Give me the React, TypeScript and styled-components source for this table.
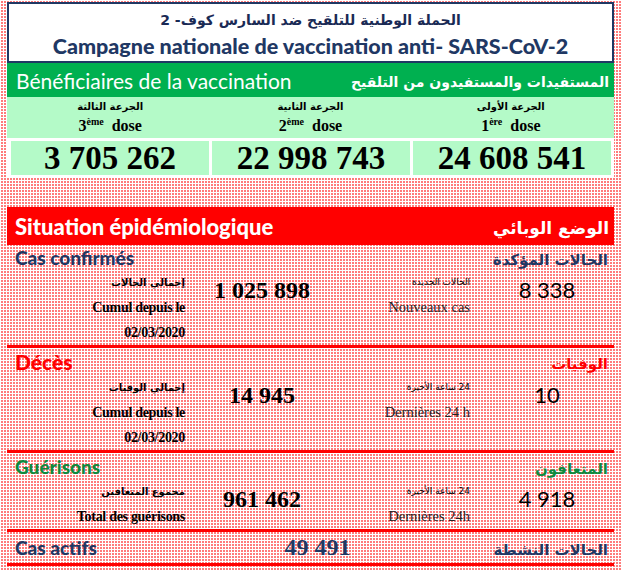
import React from 'react'
import styled, { createGlobalStyle } from 'styled-components'

const navy = '#1f3864'
const green = '#00b050'
const lightGreen = '#b4fac8'
const red = '#ff0000'
const calibri = `"Lato", "DejaVu Sans", sans-serif`
const cambria = `"Liberation Serif", "DejaVu Serif", serif`
const arabic = `"DejaVu Sans", sans-serif`

const GlobalStyle = createGlobalStyle`
  html, body {
    margin: 0;
    padding: 0;
  }
  body {
    background-color: #ff7b7b;
    background-image:
      linear-gradient(90deg, #fff 1px, transparent 1px),
      linear-gradient(#fff 1px, transparent 1px);
    background-size: 3px 3px;
  }
`

const Page = styled.main`
  width: 621px;
  height: 570px;
  box-sizing: border-box;
  padding: 2px 7px 0 7px;
  display: flex;
  flex-direction: column;
  overflow: hidden;
  white-space: nowrap;
`

const TitleBox = styled.header`
  height: 61px;
  box-sizing: border-box;
  border: 2px solid ${navy};
  background: #fff;
  display: flex;
  flex-direction: column;
  align-items: center;
  justify-content: center;
`

const ArabicTitle = styled.div`
  font-family: ${arabic};
  font-weight: bold;
  font-size: 14px;
  line-height: 26px;
  color: #1a2a55;
  direction: rtl;
`

const FrenchTitle = styled.div`
  font-family: ${calibri};
  font-weight: 900;
  font-size: 21.5px;
  line-height: 26px;
  color: ${navy};
`

const Band = styled.div<{ $bg: string; $height: number }>`
  height: ${p => p.$height}px;
  background: ${p => p.$bg};
  display: flex;
  align-items: center;
  justify-content: space-between;
  padding: 0 5px 0 9px;
  color: #fff;
`

const BandFrench = styled.span<{ $bold?: boolean }>`
  font-family: ${calibri};
  font-size: ${p => (p.$bold ? 22 : 21)}px;
  font-weight: ${p => (p.$bold ? 900 : 400)};
`

const BandArabic = styled.span<{ $size: number }>`
  font-family: ${arabic};
  font-weight: bold;
  font-size: ${p => p.$size}px;
  direction: rtl;
  padding-top: 4px;
`

const DoseLabels = styled.div`
  background: ${lightGreen};
  display: grid;
  grid-template-columns: 1fr 1fr 1fr;
  height: 41px;
  padding: 0 3px;
`

const DoseLabel = styled.div`
  display: flex;
  flex-direction: column;
  align-items: center;
  padding-top: 1px;
`

const SmallArabic = styled.div<{ $size?: number; $weight?: number }>`
  font-family: ${arabic};
  font-size: ${p => p.$size ?? 10}px;
  font-weight: ${p => p.$weight ?? 700};
  direction: rtl;
  line-height: 17px;
  color: #000;
`

const DoseText = styled.div`
  font-family: ${cambria};
  font-weight: bold;
  font-size: 16px;
  line-height: 22px;
  white-space: pre;
  sup {
    font-size: 10px;
    vertical-align: 6px;
    line-height: 0;
  }
`

const NumberRow = styled.div`
  background: #fff;
  display: grid;
  grid-template-columns: 1fr 1fr 1fr;
  gap: 3px;
  padding: 3px 3px 3px 4px;
`

const NumberCell = styled.div`
  background: ${lightGreen};
  height: 34px;
  display: flex;
  align-items: center;
  justify-content: center;
  font-family: ${cambria};
  font-weight: bold;
  font-size: 33px;
  color: #000;
`

const SituationBar = styled(Band)`
  margin-top: 29px;
  padding: 0 5px 0 8px;
`

const Section = styled.section`
  border-bottom: 3px solid ${red};
`

const SectionHead = styled.div<{ $color: string; $height: number }>`
  height: ${p => p.$height}px;
  display: flex;
  align-items: center;
  justify-content: space-between;
  padding: 0 6px 0 8px;
  color: ${p => p.$color};
`

const HeadFrench = styled.span<{ $size: number }>`
  font-family: ${calibri};
  font-weight: 900;
  font-size: ${p => p.$size}px;
`

const HeadArabic = styled.span<{ $size: number }>`
  font-family: ${arabic};
  font-weight: bold;
  font-size: ${p => p.$size}px;
  direction: rtl;
  padding-top: 5px;
`

const DataRow = styled.div`
  display: grid;
  grid-template-columns: 178px 154px 131px 1fr;
  align-items: start;
`

const LabelCol = styled.div`
  display: flex;
  flex-direction: column;
  align-items: flex-end;
`

const BoldLine = styled.div`
  font-family: ${cambria};
  font-weight: bold;
  font-size: 14px;
  line-height: 25px;
  color: #000;
  letter-spacing: -0.3px;
`

const PlainLine = styled.div`
  font-family: ${cambria};
  font-size: 14.5px;
  line-height: 25px;
  color: #222;
`

const ArabicLine = styled(SmallArabic)`
  line-height: 25px;
`

const BigNumber = styled.div`
  font-family: ${cambria};
  font-weight: bold;
  font-size: 24px;
  line-height: 40px;
  text-align: center;
  color: #000;
`

const NewNumber = styled.div`
  font-family: ${calibri};
  font-size: 22px;
  line-height: 40px;
  text-align: center;
  padding-left: 10px;
  color: #000;
`

const ActiveRow = styled.div`
  height: 31px;
  display: grid;
  grid-template-columns: 1fr auto 1fr;
  align-items: center;
  padding: 0 6px 0 8px;
  color: ${navy};
`

const ActiveNumber = styled.span`
  font-family: ${cambria};
  font-weight: bold;
  font-size: 24px;
  color: ${navy};
  padding-left: 12px;
`

const ActiveArabic = styled(HeadArabic)`
  justify-self: end;
`

const doses = [
  { ar: 'الجرعة الثالثة', n: '3', sup: 'ème', value: '3 705 262' },
  { ar: 'الجرعة الثانية', n: '2', sup: 'ème', value: '22 998 743' },
  { ar: 'الجرعة الأولى', n: '1', sup: 'ère', value: '24 608 541' },
]

type Stat = {
  fr: string
  ar: string
  color: string
  headHeight: number
  totalAr: string
  totalFr: string[]
  total: string
  recentAr: string
  recentFr: string
  recent: string
}

const stats: Stat[] = [
  {
    fr: 'Cas confirmés',
    ar: 'الحالات المؤكدة',
    color: navy,
    headHeight: 25,
    totalAr: 'إجمالي الحالات',
    totalFr: ['Cumul depuis le', '02/03/2020'],
    total: '1 025 898',
    recentAr: 'الحالات الجديدة',
    recentFr: 'Nouveaux cas',
    recent: '8 338',
  },
  {
    fr: 'Décès',
    ar: 'الوفيات',
    color: red,
    headHeight: 27,
    totalAr: 'إجمالي الوفيات',
    totalFr: ['Cumul depuis le', '02/03/2020'],
    total: '14 945',
    recentAr: '24 ساعة الأخيرة',
    recentFr: 'Dernières 24 h',
    recent: '10',
  },
  {
    fr: 'Guérisons',
    ar: 'المتعافون',
    color: '#0e8a3e',
    headHeight: 26,
    totalAr: 'مجموع المتعافين',
    totalFr: ['Total des guérisons'],
    total: '961 462',
    recentAr: '24 ساعة الأخيرة',
    recentFr: 'Dernières 24h',
    recent: '4 918',
  },
]

const App = () => {
  return (
    <>
      <GlobalStyle />
      <Page>
        <TitleBox>
          <ArabicTitle>الحملة الوطنية للتلقيح ضد السارس كوف- 2</ArabicTitle>
          <FrenchTitle>Campagne nationale de vaccination anti- SARS-CoV-2</FrenchTitle>
        </TitleBox>

        <Band $bg={green} $height={34}>
          <BandFrench>Bénéficiaires de la vaccination</BandFrench>
          <BandArabic $size={14}>المستفيدات والمستفيدون من التلقيح</BandArabic>
        </Band>

        <DoseLabels>
          {doses.map(d => (
            <DoseLabel key={d.value}>
              <SmallArabic>{d.ar}</SmallArabic>
              <DoseText>
                {d.n}
                <sup>{d.sup}</sup>
                {'  dose'}
              </DoseText>
            </DoseLabel>
          ))}
        </DoseLabels>
        <NumberRow>
          {doses.map(d => (
            <NumberCell key={d.value}>{d.value}</NumberCell>
          ))}
        </NumberRow>

        <SituationBar $bg={red} $height={38}>
          <BandFrench $bold>Situation épidémiologique</BandFrench>
          <BandArabic $size={17}>الوضع الوبائي</BandArabic>
        </SituationBar>

        {stats.map(s => (
          <Section key={s.fr}>
            <SectionHead $color={s.color} $height={s.headHeight}>
              <HeadFrench $size={s.fr === 'Décès' ? 21 : 19}>{s.fr}</HeadFrench>
              <HeadArabic $size={15}>{s.ar}</HeadArabic>
            </SectionHead>
            <DataRow>
              <LabelCol>
                <ArabicLine>{s.totalAr}</ArabicLine>
                {s.totalFr.map(t => (
                  <BoldLine key={t}>{t}</BoldLine>
                ))}
              </LabelCol>
              <BigNumber>{s.total}</BigNumber>
              <LabelCol>
                <ArabicLine $weight={400} $size={9}>
                  {s.recentAr}
                </ArabicLine>
                <PlainLine>{s.recentFr}</PlainLine>
              </LabelCol>
              <NewNumber>{s.recent}</NewNumber>
            </DataRow>
          </Section>
        ))}

        <Section>
          <ActiveRow>
            <HeadFrench $size={19}>Cas actifs</HeadFrench>
            <ActiveNumber>49 491</ActiveNumber>
            <ActiveArabic $size={15}>الحالات النشطة</ActiveArabic>
          </ActiveRow>
        </Section>
      </Page>
    </>
  )
}

export default App
